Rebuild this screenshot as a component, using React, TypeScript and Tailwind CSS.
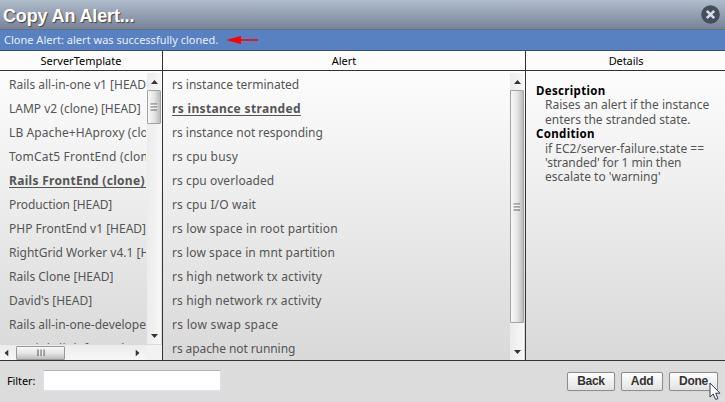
import React from 'react';

type Item = { label: string; track: string; active?: boolean };

const templates: Item[] = [
  { label: 'Rails all-in-one v1 [HEAD]', track: 'tracking-normal' },
  { label: 'LAMP v2 (clone) [HEAD]', track: 'tracking-normal' },
  { label: 'LB Apache+HAproxy (clone) [HEAD]', track: 'tracking-[0.1px]' },
  { label: 'TomCat5 FrontEnd (clone) [HEAD]', track: 'tracking-[0.2px]' },
  { label: 'Rails FrontEnd (clone) [HEAD]', track: 'tracking-[0.3px]', active: true },
  { label: 'Production [HEAD]', track: 'tracking-[-0.1px]' },
  { label: 'PHP FrontEnd v1 [HEAD]', track: 'tracking-normal' },
  { label: 'RightGrid Worker v4.1 [HEAD]', track: 'tracking-normal' },
  { label: 'Rails Clone [HEAD]', track: 'tracking-normal' },
  { label: "David's [HEAD]", track: 'tracking-normal' },
  { label: 'Rails all-in-one-developer [HEAD]', track: 'tracking-normal' },
  { label: 'my rightlink for web [HEAD]', track: 'tracking-[0.3px]' },
];

const alerts: Item[] = [
  { label: 'rs instance terminated', track: 'tracking-normal' },
  { label: 'rs instance stranded', track: 'tracking-[0.33px]', active: true },
  { label: 'rs instance not responding', track: 'tracking-normal' },
  { label: 'rs cpu busy', track: 'tracking-[0.16px]' },
  { label: 'rs cpu overloaded', track: 'tracking-[0.08px]' },
  { label: 'rs cpu I/O wait', track: 'tracking-[0.13px]' },
  { label: 'rs low space in root partition', track: 'tracking-[0.16px]' },
  { label: 'rs low space in mnt partition', track: 'tracking-[0.09px]' },
  { label: 'rs high network tx activity', track: 'tracking-[0.18px]' },
  { label: 'rs high network rx activity', track: 'tracking-[0.13px]' },
  { label: 'rs low swap space', track: 'tracking-[0.3px]' },
  { label: 'rs apache not running', track: 'tracking-[-0.08px]' },
];

function List({ items }: { items: Item[] }) {
  return (
    <ul className="min-w-0 flex-1 overflow-hidden pt-[2px] pl-[9px] text-[12px] text-[#555]">
      {items.map((it) => (
        <li
          key={it.label}
          className={`h-6 leading-6 whitespace-nowrap ${it.track} ${it.active ? 'font-bold underline underline-offset-2' : ''}`}
        >
          {it.label}
        </li>
      ))}
    </ul>
  );
}

function Tri({ className }: { className: string }) {
  return (
    <svg viewBox="0 0 7 4" className={`h-1 w-[7px] ${className}`}>
      <path d="M3.5 0L7 4H0z" fill="#333" />
    </svg>
  );
}

function Grip({ className }: { className: string }) {
  return (
    <svg viewBox="0 0 8 8" className={`size-2 ${className}`}>
      <path d="M0.5 1h6.5M0.5 4h6.5M0.5 7h6.5" stroke="#666" strokeWidth="1.2" />
      <path d="M0.5 2.2h6.5M0.5 5.2h6.5" stroke="#fff" strokeWidth="0.7" />
    </svg>
  );
}

function VBar({ thumb }: { thumb: string }) {
  return (
    <div className="flex w-[14px] shrink-0 flex-col items-center bg-gradient-to-r from-[#ececec] to-[#f7f7f7]">
      <div className="flex h-[17px] shrink-0 items-center">
        <Tri className="" />
      </div>
      <div
        className={`flex w-[14px] shrink-0 items-center justify-center rounded-[1px] border border-[#a3a3a3] bg-gradient-to-r from-[#f8f8f8] via-[#e6e6e6] to-[#bcbcbf] ${thumb}`}
      >
        <Grip className="" />
      </div>
      <div className="flex-1" />
      <div className="flex h-[17px] shrink-0 items-center">
        <Tri className="rotate-180" />
      </div>
    </div>
  );
}

function Button({ label, width }: { label: string; width: string }) {
  return (
    <button
      className={`h-[19px] rounded-[2px] border border-[#8e8e8e] bg-gradient-to-b from-white to-[#e2e2e2] font-['Liberation_Sans',Arial,sans-serif] text-[12px] leading-[17px] font-bold tracking-[-0.3px] text-[#333] shadow-[0_0_1px_#aaa] ${width}`}
    >
      {label}
    </button>
  );
}

export default function App() {
  return (
    <div className="flex h-[402px] w-[725px] flex-col overflow-hidden bg-[#dcdcdc] font-['Noto_Sans','Open_Sans',sans-serif]">
      <header className="flex h-[30px] shrink-0 items-center justify-between border-b border-[#66707f] bg-gradient-to-b from-[#b0bdcc] to-[#788398] pr-[5px] pl-[3px]">
        <h1 className="pt-[2px] font-['Liberation_Sans',Arial,sans-serif] text-[18px] leading-none font-bold tracking-[-0.15px] text-white [text-shadow:1px_1px_1px_#444]">
          Copy An Alert...
        </h1>
        <svg viewBox="0 0 19 19" className="size-[19px]">
          <circle cx="9.5" cy="9.5" r="9.3" fill="#454e5c" />
          <path d="M5.8 5.8l7.4 7.4M13.2 5.8l-7.4 7.4" stroke="#d8dfe8" strokeWidth="2.6" />
        </svg>
      </header>
      <div className="flex h-[21px] shrink-0 items-center border-b border-[#3f4c66] bg-[#5881c1] pl-1 text-[11px] text-[#e8eefa]">
        <span className="w-[214px] tracking-[0.01px] whitespace-nowrap">Clone Alert: alert was successfully cloned.</span>
        <svg viewBox="0 0 32 8" className="ml-2 h-2 w-8">
          <path d="M0 4L15 0V8z" fill="#f00" />
          <path d="M14 4H32" stroke="#f00" strokeWidth="1.6" />
        </svg>
      </div>
      <div className="flex h-[20px] shrink-0 border-b border-[#333] bg-[#fcfcfc] text-center text-[11px] leading-[20px] text-black">
        <div className="w-[163px] border-r border-[#333]">ServerTemplate</div>
        <div className="w-[363px] border-r border-[#333]">Alert</div>
        <div className="w-[199px] pl-px tracking-[-0.1px]">Details</div>
      </div>
      <main className="flex h-[290px] shrink-0 border-b border-[#333] bg-gradient-to-b from-[#fdfdfd] to-[#d9d9d9]">
        <section className="flex w-[163px] flex-col border-r border-[#333] pt-[2px]">
          <div className="flex min-h-0 flex-1 pr-px">
            <div className="-mt-[2px] flex min-w-0 flex-1">
              <List items={templates} />
            </div>
            <div className="ml-[1px] flex">
              <VBar thumb="h-[34px]" />
            </div>
          </div>
          <div className="flex h-[16px] shrink-0 pt-px">
            <div className="flex w-[146px] items-center bg-gradient-to-b from-[#ececec] to-[#f7f7f7]">
              <Tri className="ml-[3px] -rotate-90" />
              <div className="ml-[6px] flex h-[14px] w-[49px] items-center justify-center rounded-[1px] border border-[#999] bg-gradient-to-b from-[#f8f8f8] via-[#e6e6e6] to-[#bcbcbf]">
                <Grip className="rotate-90" />
              </div>
              <Tri className="mr-[5px] ml-auto rotate-90" />
            </div>
            <div className="flex-1 bg-[#f2f2f2]" />
          </div>
        </section>
        <section className="flex w-[363px] border-r border-[#333] pr-px">
          <List items={alerts} />
          <div className="flex pt-[2px]">
            <VBar thumb="h-[233px]" />
          </div>
        </section>
        <section className="w-[199px] pt-[13px] pl-[10px] text-[12px] leading-[14.4px] text-[#555]">
          <h2 className="text-[11.5px] font-bold tracking-[0.33px] text-black">Description</h2>
          <p className="pl-[9px] whitespace-nowrap">
            Raises an alert if the instance
            <br />
            enters the stranded state.
          </p>
          <h2 className="text-[11.5px] font-bold tracking-[0.33px] text-black">Condition</h2>
          <p className="pl-[9px] whitespace-nowrap">
            if EC2/server-failure.state ==
            <br />
            <span className="tracking-[-0.1px]">'stranded' for 1 min then</span>
            <br />
            escalate to 'warning'
          </p>
        </section>
      </main>
      <footer className="relative flex flex-1 items-center pl-[7px] text-[11px] text-black">
        <label className="flex items-center">
          <span className="w-[36px] tracking-[-0.1px]">Filter:</span>
          <input className="mb-[3px] h-[21px] w-[178px] border border-[#dde] border-t-[#b5b5bd] bg-white outline-none" />
        </label>
        <div className="ml-auto flex gap-[6px] pr-[7px]">
          <Button label="Back" width="w-[48px]" />
          <Button label="Add" width="w-[42px]" />
          <Button label="Done" width="w-[49px]" />
        </div>
        <svg viewBox="0 0 12 19" className="absolute top-[21px] left-[709px] h-[19px] w-3">
          <path d="M1 1V15L4.2 12L6.7 17.5L9 16.5L6.7 11.2H11z" fill="#fff" stroke="#333a50" strokeWidth="1" />
        </svg>
      </footer>
    </div>
  );
}
